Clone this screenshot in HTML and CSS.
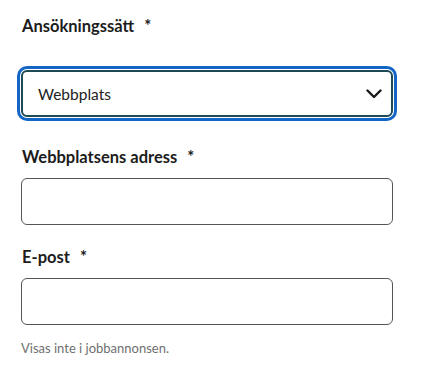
FILE: index.html
```html
<!DOCTYPE html>
<html lang="sv">
<head>
<meta charset="utf-8">
<link rel="stylesheet" href="styles.css">
</head>
<body>
<form class="form">
  <div class="field field-first">
    <label class="label">Ansökningssätt <span class="req">*</span></label>
    <div class="select focused">
      <span class="select-value">Webbplats</span>
      <svg class="chevron" width="16" height="10" viewBox="0 0 16 10"><polyline points="1.5,1.5 8,8 14.5,1.5" fill="none" stroke="#1a1a1a" stroke-width="2.4" stroke-linecap="round" stroke-linejoin="round"/></svg>
    </div>
  </div>
  <div class="field">
    <label class="label">Webbplatsens adress <span class="req">*</span></label>
    <div class="input"></div>
  </div>
  <div class="field">
    <label class="label">E-post <span class="req">*</span></label>
    <div class="input"></div>
    <p class="help">Visas inte i jobbannonsen.</p>
  </div>
</form>
</body>
</html>
```
FILE: styles.css
```css
html, body {
  margin: 0;
  padding: 0;
  background: #fff;
}
body {
  font-family: "Lato", "Open Sans", sans-serif;
  color: #1a1a1a;
}
.form {
  width: 372px;
  padding: 14px 0 0 21px;
  display: flex;
  flex-direction: column;
}
.field {
  display: flex;
  flex-direction: column;
  margin-bottom: 20px;
}
.field-first {
  margin-bottom: 28px;
}
.label {
  font-size: 16.5px;
  font-weight: 700;
  line-height: 24px;
  margin-bottom: 9px;
  padding-left: 1px;
  color: #1c1c1c;
}
.field-first .label {
  margin-bottom: 32px;
}
.req {
  margin-left: 6px;
}
.select, .input {
  box-sizing: border-box;
  height: 47px;
  border: 1.5px solid #555;
  border-radius: 6px;
  background: #fff;
}
.select {
  display: flex;
  align-items: center;
  justify-content: space-between;
  padding: 0 9px 0 15px;
}
.focused {
  border: 2px solid #1d4a55;
  box-shadow: 0 0 0 1px #fff, 0 0 0 4px #1466c6;
}
.select-value {
  font-size: 15.5px;
  color: #222;
}
.help {
  margin: 13px 0 0;
  font-size: 13px;
  color: #6f6f6f;
  line-height: 20px;
}
```
